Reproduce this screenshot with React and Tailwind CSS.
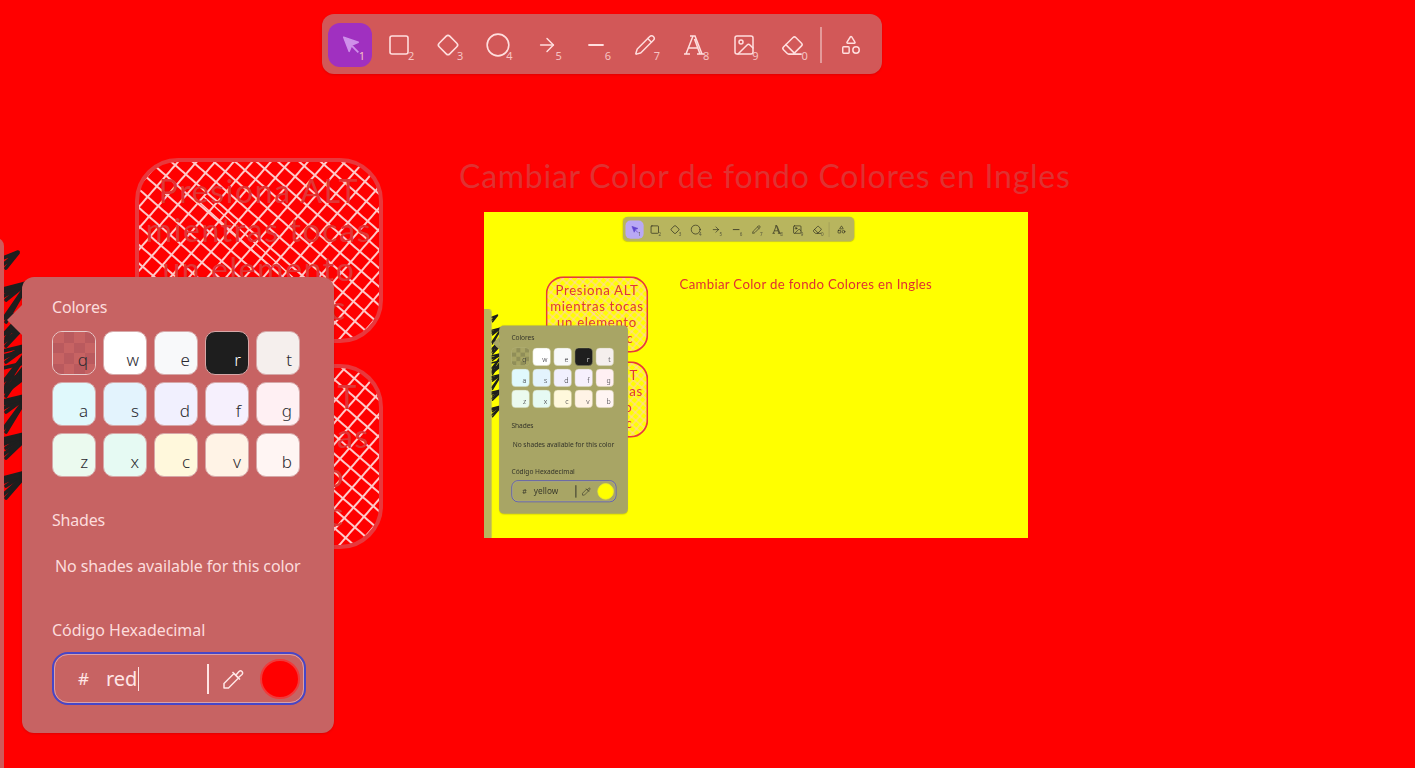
import { ArrowRight, Circle, Eraser, Image, Minus, Pencil, Shapes, Square } from 'lucide-react'

const THEMES = {
  red: {
    toolbar: 'bg-[#d25858]',
    divider: 'bg-[#e49a9a]',
    icon: 'text-[#ffdede]',
    hint: 'text-[#f6c4c4]',
    active: 'bg-[#a030c0]',
    cursor: '#cf90ea',
    panel: 'bg-[#c76363]',
    label: 'text-[#fcdcdc]',
    strip: 'bg-[#cf5a5a]',
    checkA: 'bg-[#c76363]',
    checkB: 'bg-[#ba5a5e]',
    swatchBorder: 'border-[#d6a8a8]',
    clearBorder: 'border-[#e8cccc]',
    typed: 'text-[#ffe6e6]',
    rule: 'bg-[#ffe4e4]',
    ring: 'border-[#d9a0a8]',
    dot: 'bg-[#ff0000] border-[#f03a3a]',
  },
  yellow: {
    toolbar: 'bg-[#b8b55e]',
    divider: 'bg-[#a09d58]',
    icon: 'text-[#25251c]',
    hint: 'text-[#55553a]',
    active: 'bg-[#b9a9f4]',
    cursor: '#5f45d0',
    panel: 'bg-[#a8a565]',
    label: 'text-[#35352a]',
    strip: 'bg-[#b8b55e]',
    checkA: 'bg-[#a8a565]',
    checkB: 'bg-[#908e58]',
    swatchBorder: 'border-[#bdbb8a]',
    clearBorder: 'border-[#bdbb8a]',
    typed: 'text-[#3a3a2c]',
    rule: 'bg-[#1e1e1e]',
    ring: 'border-[#c0bd90]',
    dot: 'bg-[#ffff00] border-[#e8e830]',
  },
}

const SWATCHES = [
  ['q', ''],
  ['w', 'bg-[#ffffff]'],
  ['e', 'bg-[#f8f9fa]'],
  ['r', 'bg-[#1e1e1e]'],
  ['t', 'bg-[#f5efed]'],
  ['a', 'bg-[#e0f9fc]'],
  ['s', 'bg-[#e3f3fd]'],
  ['d', 'bg-[#f1f0fe]'],
  ['f', 'bg-[#f6f0fd]'],
  ['g', 'bg-[#fff0f3]'],
  ['z', 'bg-[#ebfaef]'],
  ['x', 'bg-[#e6faf3]'],
  ['c', 'bg-[#fff8dc]'],
  ['v', 'bg-[#fff3e6]'],
  ['b', 'bg-[#fff5f3]'],
]

// only the part of each line that shows beside the color panel
const FIRST_NOTE = [
  ['Presiona ALT', 'text-center'],
  ['mientras tocas', 'text-center'],
  ['un elemento', 'text-center'],
  ['c', 'text-right pr-[36px]'],
]
const SECOND_NOTE = [
  ['T', 'text-right pr-[25px]'],
  ['as', 'text-right pr-[13px]'],
  ['o', 'text-right pr-[38px]'],
  ['c', 'text-right pr-[38px]'],
]

function DiamondIcon() {
  return (
    <svg width="24" height="24" viewBox="0 0 24 24" fill="none" stroke="currentColor" strokeWidth="1.6">
      <rect x="4.5" y="4.5" width="15" height="15" rx="2.5" transform="rotate(45 12 12)" />
    </svg>
  )
}

function TextIcon() {
  return (
    <svg width="24" height="24" viewBox="0 0 24 24" fill="none" stroke="currentColor" strokeWidth="1.5">
      <path d="M2 21h6M15 21h7M4 21 11 3h2l7 18M8 3h5M6.5 15h9M12.5 6l5.5 15" />
    </svg>
  )
}

function SelectIcon({ color }) {
  return (
    <svg width="22" height="22" viewBox="0 0 24 24" fill="none" className="ml-[2px]">
      <path d="M4 3.5 20 9l-7 3-3 7z" fill={color} stroke={color} strokeWidth="1.5" strokeLinejoin="round" />
      <path d="m13 13 7 7" stroke={color} strokeWidth="2" />
    </svg>
  )
}

function DropperIcon({ className }) {
  return (
    <svg width="24" height="24" viewBox="0 0 24 24" fill="none" stroke="currentColor" strokeWidth="1.5" strokeLinejoin="round" className={className}>
      <path d="M3 21v-4.5L13 6.5l4.5 4.5-10 10z" />
      <path d="m11.5 5 7.500 7.500" />
      <path d="m15 8 3-3.500a2 2 0 0 1 3 3l-3.500 3" />
    </svg>
  )
}

function ToolHint({ n, theme }) {
  return <span className={`absolute right-[7px] bottom-[6px] text-[11px] leading-none ${theme.hint}`}>{n}</span>
}

function Toolbar({ theme }) {
  const tools = [
    [<Square key="i" size={24} strokeWidth={1.6} />, '2'],
    [<DiamondIcon key="i" />, '3'],
    [<Circle key="i" size={26} strokeWidth={1.5} />, '4'],
    [<ArrowRight key="i" size={22} strokeWidth={1.6} />, '5'],
    [<Minus key="i" size={24} strokeWidth={1.8} />, '6'],
    [<Pencil key="i" size={22} strokeWidth={1.6} />, '7'],
    [<TextIcon key="i" />, '8'],
    [<Image key="i" size={24} strokeWidth={1.5} />, '9'],
    [<Eraser key="i" size={23} strokeWidth={1.6} />, '0'],
  ]
  return (
    <div className={`absolute left-[322px] top-[14px] flex h-[60px] w-[560px] items-center gap-[5.2px] rounded-[12px] pl-[6px] pt-[2px] shadow-sm ${theme.toolbar}`}>
      <button className={`relative flex h-[44px] w-[44px] items-center justify-center rounded-[12px] ${theme.active}`}>
        <SelectIcon color={theme.cursor} />
        <ToolHint n="1" theme={theme} />
      </button>
      {tools.map(([icon, n]) => (
        <button key={n} className={`relative flex h-[44px] w-[44px] items-center justify-center ${theme.icon}`}>
          {icon}
          <ToolHint n={n} theme={theme} />
        </button>
      ))}
      <div className={`h-[36px] w-[2px] ${theme.divider}`} />
      <button className={`ml-[2px] flex h-[44px] w-[44px] items-center justify-center ${theme.icon}`}>
        <Shapes size={22} strokeWidth={1.6} />
      </button>
    </div>
  )
}

function Checker({ theme }) {
  const cells = []
  for (let i = 0; i < 16; i++) {
    const odd = (Math.floor(i / 4) + (i % 4)) % 2 === 1
    cells.push(<div key={i} className={odd ? theme.checkB : theme.checkA} />)
  }
  return <div className="absolute inset-0 grid grid-cols-4 grid-rows-4 overflow-hidden rounded-[9px]">{cells}</div>
}

function ColorPanel({ theme, value, caret }) {
  return (
    <div className={`absolute left-[22px] top-[277px] h-[456px] w-[312px] rounded-[12px] px-[30px] font-['Noto_Sans',sans-serif] shadow-sm ${theme.panel}`}>
      <div className={`absolute left-[-15px] top-[27px] h-[32px] w-[16px] [clip-path:polygon(100%_0,0_50%,100%_100%)] ${theme.panel}`} />
      <div className={`mt-[19px] text-[16px] leading-[22px] tracking-[-0.2px] ${theme.label}`}>Colores</div>
      <div className="mt-[13px] grid w-[248px] grid-cols-5 gap-[7px]">
        {SWATCHES.map(([key, bg]) => {
          const dark = key === 'r'
          const clear = key === 'q'
          return (
            <div key={key} className={`relative h-[44px] w-[44px] rounded-[10px] border ${clear ? theme.clearBorder : theme.swatchBorder} ${bg}`}>
              {clear && <Checker theme={theme} />}
              <span className={`absolute right-[7px] bottom-[5px] text-[17px] font-light leading-[18px] ${dark ? 'text-white' : 'text-[#2a2a30]'}`}>{key}</span>
            </div>
          )
        })}
      </div>
      <div className={`mt-[32px] text-[16px] leading-[22px] tracking-[-0.2px] ${theme.label}`}>Shades</div>
      <div className={`ml-[3px] mt-[24px] whitespace-nowrap text-[16px] leading-[22px] tracking-[-0.1px] ${theme.label}`}>No shades available for this color</div>
      <div className={`mt-[42px] whitespace-nowrap text-[16px] leading-[22px] tracking-[-0.05px] ${theme.label}`}>Código Hexadecimal</div>
      <div className="mt-[11px] h-[53px] w-[254px] rounded-[16px] border-2 border-[#4646c8]">
        <div className={`flex h-full w-full items-center rounded-[14px] border pl-[23px] ${theme.ring}`}>
          <span className={`text-[17px] ${theme.typed}`}>#</span>
          <span className={`ml-[17px] flex w-[101px] items-center text-[20px] ${theme.typed}`}>
            {value}
            {caret && <span className={`ml-[1px] h-[24px] w-[1px] ${theme.rule}`} />}
          </span>
          <div className={`h-[30px] w-[2px] ${theme.rule}`} />
          <DropperIcon className={`ml-[12px] ${theme.typed}`} />
          <div className={`ml-[15px] h-[40px] w-[40px] rounded-full border-2 ${theme.dot}`} />
        </div>
      </div>
    </div>
  )
}

// roughjs style shape: hatch fill plus a thick outline
function Note({ top, lines, patternId }) {
  return (
    <div className="absolute left-[135px] h-[185px] w-[248px]" style={{ top }}>
      <svg className="absolute inset-0" width="248" height="185" viewBox="0 0 248 185" fill="none">
        <defs>
          <pattern id={patternId} width="14" height="14" patternUnits="userSpaceOnUse" patternTransform="rotate(41)">
            <path d="M0 7H14M7 0V14" stroke="#ffc9c9" strokeWidth="2" />
          </pattern>
          <clipPath id={`${patternId}-clip`}>
            <rect x="3" y="3" width="242" height="179" rx="40" />
          </clipPath>
        </defs>
        <rect x="3" y="3" width="242" height="179" rx="40" fill={`url(#${patternId})`} />
        <g clipPath={`url(#${patternId}-clip)`} stroke="#ffc9c9" strokeWidth="1.5">
          <path d="M62 42 190 158M68 38 196 154" />
        </g>
        <rect x="2" y="2" width="244" height="181" rx="41" stroke="#e8383c" strokeWidth="4" />
      </svg>
      <div className="absolute inset-x-0 top-[13px] font-['Lato',sans-serif] text-[32px] leading-[39px] tracking-[1.6px] text-[#e03636]">
        {lines.map(([text, align], i) => (
          <div key={i} className={align}>{text}</div>
        ))}
      </div>
    </div>
  )
}

function Scribbles() {
  const bursts = [
    [252, 268, 18],
    [283, 300, 26],
    [286, 322, 26],
    [312, 338, 24],
    [328, 346, 22],
    [345, 362, 28],
    [350, 385, 28],
    [362, 396, 28],
    [374, 392, 28],
    [395, 412, 28],
    [398, 432, 26],
    [433, 448, 28],
    [436, 458, 28],
    [472, 486, 26],
    [474, 498, 26],
  ]
  return (
    <svg className="absolute left-0 top-[240px]" width="40" height="270" viewBox="0 240 40 270" fill="none" stroke="#1e1e1e" strokeWidth="3.600" strokeLinecap="round" strokeLinejoin="round">
      {bursts.map(([a, b, x], i) => (
        <path key={i} d={`M4 ${b - 4} L${x} ${a} L3 ${a + 6} M${x} ${a + 1} L6 ${b}`} />
      ))}
    </svg>
  )
}

function Scene({ theme, value, caret, id, children }) {
  return (
    <>
      <div className="absolute left-[459px] top-[155px] whitespace-nowrap font-['Lato',sans-serif] text-[32px] leading-[42px] tracking-[0.75px] text-[#e03131]">
        Cambiar Color de fondo Colores en Ingles
      </div>
      <Note top="158px" patternId={`${id}-a`} lines={FIRST_NOTE} />
      <Note top="364px" patternId={`${id}-b`} lines={SECOND_NOTE} />
      {children}
      <Scribbles />
      <div className={`absolute left-[-30px] top-[238px] h-[560px] w-[34px] rounded-[8px] ${theme.strip}`} />
      <ColorPanel theme={theme} value={value} caret={caret} />
      <Toolbar theme={theme} />
    </>
  )
}

export default function App() {
  return (
    <div className="relative h-[768px] w-[1415px] overflow-hidden bg-[#ff0000]">
      <Scene theme={THEMES.red} value="red" caret id="big">
        <div className="absolute left-[484px] top-[212px] h-[326px] w-[544px] overflow-hidden bg-[#ffff00]">
          <div className="absolute left-[6px] top-[-1.5px] h-[768px] w-[1415px] origin-top-left scale-[0.413]">
            <Scene theme={THEMES.yellow} value="yellow" id="mini" />
          </div>
        </div>
      </Scene>
    </div>
  )
}
